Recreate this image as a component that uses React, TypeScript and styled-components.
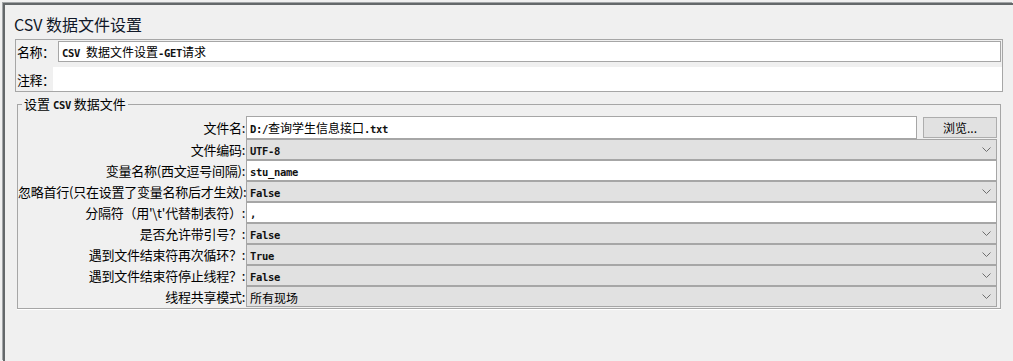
import React from "react";
import styled, { createGlobalStyle } from "styled-components";

const GlobalStyle = createGlobalStyle`
  html, body {
    margin: 0;
    padding: 0;
    background: #f0f0f0;
  }
  #root {
    width: 1013px;
    height: 361px;
    overflow: hidden;
  }
`;

type FieldKind = "file" | "text" | "combo";

interface SettingRow {
  label: string;
  value: string;
  kind: FieldKind;
}

const rows: SettingRow[] = [
  { label: "文件名:", value: "D:/查询学生信息接口.txt", kind: "file" },
  { label: "文件编码:", value: "UTF-8", kind: "combo" },
  { label: "变量名称(西文逗号间隔):", value: "stu_name", kind: "text" },
  { label: "忽略首行(只在设置了变量名称后才生效):", value: "False", kind: "combo" },
  { label: "分隔符（用'\\t'代替制表符）:", value: ",", kind: "text" },
  { label: "是否允许带引号？:", value: "False", kind: "combo" },
  { label: "遇到文件结束符再次循环？:", value: "True", kind: "combo" },
  { label: "遇到文件结束符停止线程？:", value: "False", kind: "combo" },
  { label: "线程共享模式:", value: "所有现场", kind: "combo" },
];

const CJK = /[\u3000-\u9fff\uff00-\uffef]/;

// field text mixes a narrow mono font for latin with 12px CJK
const MixedText: React.FC<{ text: string }> = ({ text }) => {
  const parts = text.split(/([\u3000-\u9fff\uff00-\uffef]+)/).filter(Boolean);
  return (
    <FieldValue>
      {parts.map((p, i) =>
        CJK.test(p) ? <CjkRun key={i}>{p}</CjkRun> : <MonoRun key={i}>{p}</MonoRun>
      )}
    </FieldValue>
  );
};

const Chevron = () => (
  <svg width="9" height="5" viewBox="0 0 9 5">
    <polyline points="0.5,0.5 4.5,4.5 8.5,0.5" fill="none" stroke="#6e6e6e" strokeWidth="1" />
  </svg>
);

const App: React.FC = () => {
  return (
    <>
      <GlobalStyle />
      <Window>
        <Title>CSV 数据文件设置</Title>
        <NamePanel>
          <NameRow>
            <NameLabel>名称：</NameLabel>
            <NameInput>
              <MixedText text="CSV 数据文件设置-GET请求" />
            </NameInput>
          </NameRow>
          <CommentRow>
            <CommentLabel>注释：</CommentLabel>
            <CommentArea />
          </CommentRow>
        </NamePanel>
        <Group>
          <Legend>
            设置 <MonoRun>CSV</MonoRun> 数据文件
          </Legend>
          <Grid>
            {rows.map((r) => {
              const h = r.kind === "file" ? 23 : 21;
              return (
                <React.Fragment key={r.label}>
                  <RowLabel $h={h}>{r.label}</RowLabel>
                  {r.kind === "file" ? (
                    <FileCell $h={h}>
                      <Field $h={h} $combo={false}>
                        <MixedText text={r.value} />
                      </Field>
                      <BrowseButton>浏览...</BrowseButton>
                    </FileCell>
                  ) : (
                    <Field $h={h} $combo={r.kind === "combo"}>
                      <MixedText text={r.value} />
                      {r.kind === "combo" && <Chevron />}
                    </Field>
                  )}
                </React.Fragment>
              );
            })}
          </Grid>
        </Group>
      </Window>
    </>
  );
};

export default App;

const Window = styled.div`
  box-sizing: border-box;
  height: 358px;
  margin: 3px 0 0 3px;
  border-top: 2px solid #64686a;
  border-left: 2px solid #64686a;
  box-shadow: -1px -1px 0 #a2a5a7;
  padding: 0 9px 0 10px;
  background: #f0f0f0;
  font-family: "Noto Sans CJK SC", "Noto Sans", sans-serif;
  color: #000;
`;

const Title = styled.div`
  box-sizing: border-box;
  height: 34px;
  padding-top: 7px;
  margin-left: -1px;
  font-size: 16px;
  line-height: 24px;
  color: #101828;
`;

const NamePanel = styled.div`
  border: 1px solid #a6a6a6;
  width: 986px;
`;

const NameRow = styled.div`
  display: flex;
  box-sizing: border-box;
  height: 27px;
  padding: 1px 1px 0 0;
`;

const NameLabel = styled.div`
  width: 42px;
  flex-shrink: 0;
  padding-left: 1px;
  box-sizing: border-box;
  font-size: 13px;
  line-height: 22px;
  white-space: nowrap;
  letter-spacing: -0.5px;
`;

const NameInput = styled.div`
  flex: 1;
  box-sizing: border-box;
  height: 21px;
  border: 1px solid #a6a6a6;
  background: #fff;
  padding-left: 2px;
  display: flex;
  align-items: center;
  white-space: nowrap;
`;

const CommentRow = styled.div`
  display: flex;
  height: 24px;
`;

const CommentLabel = styled.div`
  width: 37px;
  flex-shrink: 0;
  padding-left: 1px;
  box-sizing: border-box;
  font-size: 13px;
  line-height: 26px;
  white-space: nowrap;
  letter-spacing: -0.5px;
`;

const CommentArea = styled.div`
  flex: 1;
  background: #fff;
`;

const Group = styled.fieldset`
  width: 984px;
  box-sizing: border-box;
  margin: 4px 0 0 2px;
  padding: 3px 3px 1px 0;
  border: 1px solid #a6a6a6;
  box-shadow: 0 1px 0 #fff;
  min-inline-size: 0;
`;

const Legend = styled.legend`
  margin-left: 4px;
  padding: 0 2px;
  font-size: 13px;
  line-height: 16px;
`;

const Grid = styled.div`
  display: grid;
  grid-template-columns: 228px 1fr;
`;

const RowLabel = styled.div<{ $h: number }>`
  height: ${(p) => p.$h}px;
  line-height: ${(p) => p.$h}px;
  text-align: right;
  padding-right: 1px;
  font-size: 13px;
  white-space: nowrap;
  letter-spacing: -0.25px;
`;

const FileCell = styled.div<{ $h: number }>`
  display: flex;
  align-items: center;
  gap: 6px;
  height: ${(p) => p.$h}px;
`;

const Field = styled.div<{ $h: number; $combo: boolean }>`
  flex: 1;
  box-sizing: border-box;
  height: ${(p) => p.$h}px;
  border: 1px solid #a6a6a6;
  background: ${(p) => (p.$combo ? "#e1e1e1" : "#fff")};
  padding: 0 5px 0 2px;
  display: flex;
  align-items: center;
  justify-content: space-between;
  white-space: nowrap;
`;

const FieldValue = styled.span`
  padding-left: 1px;
  white-space: pre;
  line-height: 16px;
`;

const BrowseButton = styled.div`
  box-sizing: border-box;
  width: 74px;
  height: 21px;
  border: 1px solid #adadad;
  background: #e1e1e1;
  font-size: 12px;
  line-height: 19px;
  text-align: center;
`;

const MonoRun = styled.span`
  font-family: "DejaVu Sans Mono", "Liberation Mono", monospace;
  font-size: 10.5px;
  font-weight: bold;
  letter-spacing: -0.32px;
  color: #111;
`;

const CjkRun = styled.span`
  font-family: "Noto Sans CJK SC", sans-serif;
  font-size: 12px;
`;
